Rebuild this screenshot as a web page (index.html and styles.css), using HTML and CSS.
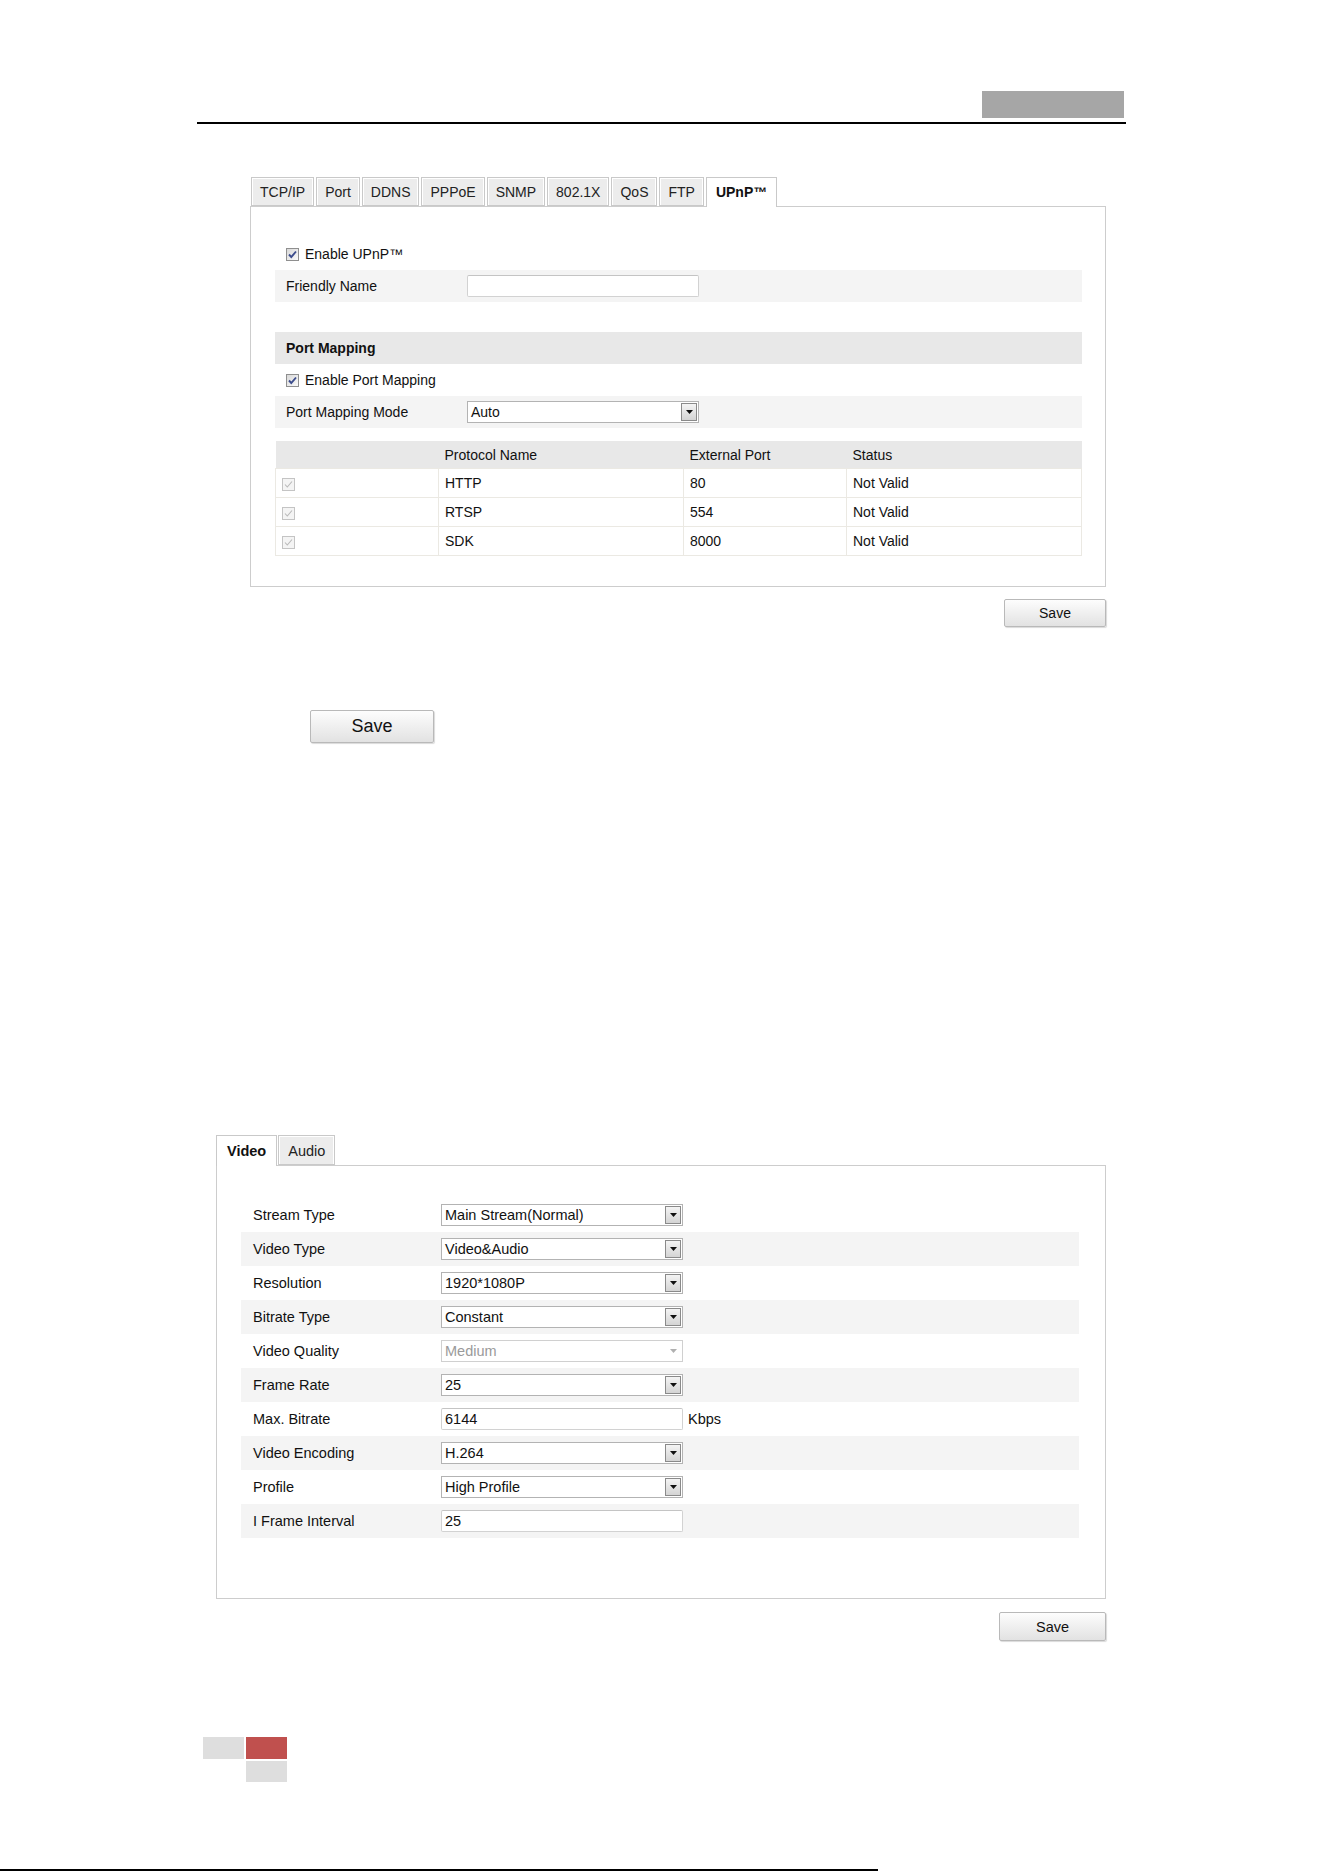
FILE: index.html
```html
<!DOCTYPE html>
<html>
  <head>
    <title>Network / Video Settings</title>
    <link rel="stylesheet" href="styles.css">
  </head>
  <body>
    <div class="page-head">
      <div class="chapter"></div>
    </div>

    <!-- UPnP settings -->
    <div class="section section-net">
      <div class="tabs">
        <div class="tab">TCP/IP</div>
        <div class="tab">Port</div>
        <div class="tab">DDNS</div>
        <div class="tab">PPPoE</div>
        <div class="tab">SNMP</div>
        <div class="tab">802.1X</div>
        <div class="tab">QoS</div>
        <div class="tab">FTP</div>
        <div class="tab active">UPnP™</div>
      </div>
      <div class="panel">
        <div class="row">
          <span class="check"><svg viewBox="0 0 11 11"><path d="M2 5.5 L4.3 8 L9 2.5"/></svg></span>
          <span>Enable UPnP™</span>
        </div>
        <div class="row band">
          <span class="label">Friendly Name</span>
          <span class="text-input"></span>
        </div>
        <div class="spacer"></div>
        <div class="row title">Port Mapping</div>
        <div class="row">
          <span class="check"><svg viewBox="0 0 11 11"><path d="M2 5.5 L4.3 8 L9 2.5"/></svg></span>
          <span>Enable Port Mapping</span>
        </div>
        <div class="row band">
          <span class="label">Port Mapping Mode</span>
          <span class="select"><span class="value">Auto</span><span class="arrow"><svg viewBox="0 0 7 4"><polygon points="0,0 7,0 3.5,4"/></svg></span></span>
        </div>

        <table class="ports">
          <colgroup>
            <col style="width:163px">
            <col style="width:245px">
            <col style="width:163px">
            <col>
          </colgroup>
          <thead>
            <tr><th></th><th>Protocol Name</th><th>External Port</th><th>Status</th></tr>
          </thead>
          <tbody>
            <tr>
              <td><span class="check disabled"><svg viewBox="0 0 11 11"><path d="M2 5.5 L4.3 8 L9 2.5"/></svg></span></td>
              <td>HTTP</td><td>80</td><td>Not Valid</td>
            </tr>
            <tr>
              <td><span class="check disabled"><svg viewBox="0 0 11 11"><path d="M2 5.5 L4.3 8 L9 2.5"/></svg></span></td>
              <td>RTSP</td><td>554</td><td>Not Valid</td>
            </tr>
            <tr>
              <td><span class="check disabled"><svg viewBox="0 0 11 11"><path d="M2 5.5 L4.3 8 L9 2.5"/></svg></span></td>
              <td>SDK</td><td>8000</td><td>Not Valid</td>
            </tr>
          </tbody>
        </table>
      </div>
      <div class="save-row">
        <button class="btn">Save</button>
      </div>
    </div>

    <button class="btn btn-large">Save</button>

    <!-- Video settings -->
    <div class="section section-video">
      <div class="tabs">
        <div class="tab active">Video</div>
        <div class="tab">Audio</div>
      </div>
      <div class="panel">
        <div class="row">
          <span class="label">Stream Type</span>
          <span class="select"><span class="value">Main Stream(Normal)</span><span class="arrow"><svg viewBox="0 0 7 4"><polygon points="0,0 7,0 3.5,4"/></svg></span></span>
        </div>
        <div class="row band">
          <span class="label">Video Type</span>
          <span class="select"><span class="value">Video&amp;Audio</span><span class="arrow"><svg viewBox="0 0 7 4"><polygon points="0,0 7,0 3.5,4"/></svg></span></span>
        </div>
        <div class="row">
          <span class="label">Resolution</span>
          <span class="select"><span class="value">1920*1080P</span><span class="arrow"><svg viewBox="0 0 7 4"><polygon points="0,0 7,0 3.5,4"/></svg></span></span>
        </div>
        <div class="row band">
          <span class="label">Bitrate Type</span>
          <span class="select"><span class="value">Constant</span><span class="arrow"><svg viewBox="0 0 7 4"><polygon points="0,0 7,0 3.5,4"/></svg></span></span>
        </div>
        <div class="row">
          <span class="label">Video Quality</span>
          <span class="select disabled"><span class="value">Medium</span><span class="arrow"><svg viewBox="0 0 7 4"><polygon points="0,0 7,0 3.5,4"/></svg></span></span>
        </div>
        <div class="row band">
          <span class="label">Frame Rate</span>
          <span class="select"><span class="value">25</span><span class="arrow"><svg viewBox="0 0 7 4"><polygon points="0,0 7,0 3.5,4"/></svg></span></span>
        </div>
        <div class="row">
          <span class="label">Max. Bitrate</span>
          <span class="text-input">6144</span>
          <span class="unit">Kbps</span>
        </div>
        <div class="row band">
          <span class="label">Video Encoding</span>
          <span class="select"><span class="value">H.264</span><span class="arrow"><svg viewBox="0 0 7 4"><polygon points="0,0 7,0 3.5,4"/></svg></span></span>
        </div>
        <div class="row">
          <span class="label">Profile</span>
          <span class="select"><span class="value">High Profile</span><span class="arrow"><svg viewBox="0 0 7 4"><polygon points="0,0 7,0 3.5,4"/></svg></span></span>
        </div>
        <div class="row band">
          <span class="label">I Frame Interval</span>
          <span class="text-input">25</span>
        </div>
      </div>
      <div class="save-row">
        <button class="btn">Save</button>
      </div>
    </div>

    <div class="page-foot">
      <div class="block grey"></div>
      <div class="block red"></div>
      <div></div>
      <div class="block grey"></div>
    </div>
    <div class="page-rule"></div>
  </body>
</html>
```

FILE: styles.css
```css
html, body {
  margin: 0;
  height: 1872px;
  overflow: hidden;
}
body {
  font-family: "Liberation Sans", Arial, sans-serif;
  color: #111;
  background: #fff;
}

/* page header with chapter tab */
.page-head {
  margin-left: 197px;
  width: 929px;
  padding: 91px 0 4px;
  border-bottom: 2px solid #000;
  display: flex;
  justify-content: flex-end;
}
.chapter {
  width: 142px;
  height: 27px;
  margin-right: 2px;
  background: #a6a6a6;
}

/* tab strip */
.tabs {
  display: flex;
  align-items: flex-end;
  gap: 2px;
}
.tab {
  height: 27px;
  line-height: 28px;
  padding: 0 8px;
  border: 1px solid #c9c9c9;
  background: #ececec;
  box-shadow: inset 1px 1px 0 #fff, inset -1px 0 0 #fff;
  color: #222;
  white-space: nowrap;
}
.tab.active {
  height: 29px;
  line-height: 29px;
  padding: 0 9px;
  border-bottom: none;
  margin-bottom: -1px;
  position: relative;
  z-index: 1;
  background: #fff;
  box-shadow: none;
  font-weight: bold;
  color: #111;
}

.panel {
  border: 1px solid #cdcdcd;
}

.row {
  display: flex;
  align-items: center;
  white-space: nowrap;
}
.row.band {
  background: #f4f4f4;
}
.row.title {
  background: #e8e8e8;
  font-weight: bold;
}
.spacer {
  height: 30px;
}

/* checkbox */
.check {
  width: 11px;
  height: 11px;
  border: 1px solid #8f8f8f;
  background: linear-gradient(135deg, #d9d9d9, #fafafa);
  display: inline-flex;
  margin-right: 6px;
}
.check svg {
  width: 11px;
  height: 11px;
  fill: none;
  stroke: #3c4c8c;
  stroke-width: 1.9;
}
.check.disabled {
  border-color: #c4c4c4;
  background: #f4f4f4;
}
.check.disabled svg {
  stroke: #b9b9b9;
  stroke-width: 1.1;
}

/* fake form controls */
.text-input,
.select {
  box-sizing: border-box;
  display: flex;
  align-items: center;
  background: #fff;
  border: 1px solid #d2d2d2;
  border-top-color: #c4c4c4;
  border-radius: 2px;
  padding-left: 3px;
}
.select {
  border: 1px solid #b3b3b3;
  border-radius: 0;
  padding-right: 1px;
}
.select .value {
  flex: 1;
}
.select .arrow {
  box-sizing: border-box;
  width: 16px;
  height: calc(100% - 2px);
  border: 1px solid #8a8a8a;
  background: linear-gradient(#f4f4f4, #d4d4d4);
  display: flex;
  align-items: center;
  justify-content: center;
}
.select .arrow svg {
  width: 7px;
  height: 4px;
  fill: #111;
}
.select.disabled {
  color: #9a9a9a;
  border-color: #d0d0d0;
}
.select.disabled .arrow {
  border-color: transparent;
  background: #fff;
}
.select.disabled .arrow svg {
  fill: #b0b0b0;
}
.unit {
  margin-left: 5px;
}

/* buttons */
.btn {
  display: block;
  box-sizing: border-box;
  border: 1px solid #b9b9b9;
  border-radius: 2px;
  background: linear-gradient(#fdfdfd, #e2e2e2);
  box-shadow: 1px 1px 1px rgba(0, 0, 0, 0.15);
  font-family: "Liberation Sans", Arial, sans-serif;
  color: #111;
  padding: 0;
}
.save-row {
  display: flex;
  justify-content: flex-end;
}

/* network section */
.section-net {
  margin: 53px 0 0 250px;
  width: 856px;
  font-size: 14px;
}
.section-net .tabs {
  padding-left: 1px;
}
.section-net .panel {
  padding: 31px 23px 30px 24px;
}
.section-net .row {
  height: 32px;
  padding-left: 11px;
}
.section-net .label {
  width: 181px;
}
.section-net .text-input,
.section-net .select {
  width: 232px;
  height: 22px;
}
.section-net .save-row {
  margin-top: 12px;
}
.section-net .btn {
  width: 102px;
  height: 28px;
  font-size: 14px;
}

/* port mapping table */
.ports {
  margin-top: 13px;
  width: 807px;
  border-collapse: collapse;
  table-layout: fixed;
}
.ports th {
  height: 27px;
  padding: 0 0 0 6px;
  background: #e8e8e8;
  font-weight: normal;
  text-align: left;
}
.ports td {
  height: 28px;
  padding: 0 0 0 6px;
  border: 1px solid #ebe9e3;
}
.ports td .check {
  vertical-align: middle;
  margin-right: 0;
}

.btn-large {
  margin: 83px 0 0 310px;
  width: 124px;
  height: 33px;
  font-size: 18px;
}

/* video section */
.section-video {
  margin: 392px 0 0 216px;
  width: 890px;
  font-size: 14.5px;
}
.section-video .tab {
  height: 28px;
  line-height: 30px;
  padding: 0 9px;
}
.section-video .tab.active {
  height: 30px;
  line-height: 31px;
  padding: 0 10px;
}
.section-video .tabs {
  gap: 1px;
}
.section-video .panel {
  padding: 32px 26px 60px 24px;
}
.section-video .row {
  height: 34px;
  padding-left: 12px;
}
.section-video .label {
  width: 188px;
}
.section-video .text-input,
.section-video .select {
  width: 242px;
  height: 22px;
}
.section-video .save-row {
  margin-top: 13px;
}
.section-video .btn {
  width: 107px;
  height: 29px;
  font-size: 14.5px;
}

/* footer marks */
.page-foot {
  margin: 96px 0 0 203px;
  display: grid;
  grid-template-columns: 41px 41px;
  grid-template-rows: 22px 21px;
  gap: 2px;
}
.block.grey {
  background: #dedede;
}
.block.red {
  background: #c0504e;
}
.page-rule {
  margin-top: 87px;
  width: 878px;
  border-top: 2px solid #000;
}
```
